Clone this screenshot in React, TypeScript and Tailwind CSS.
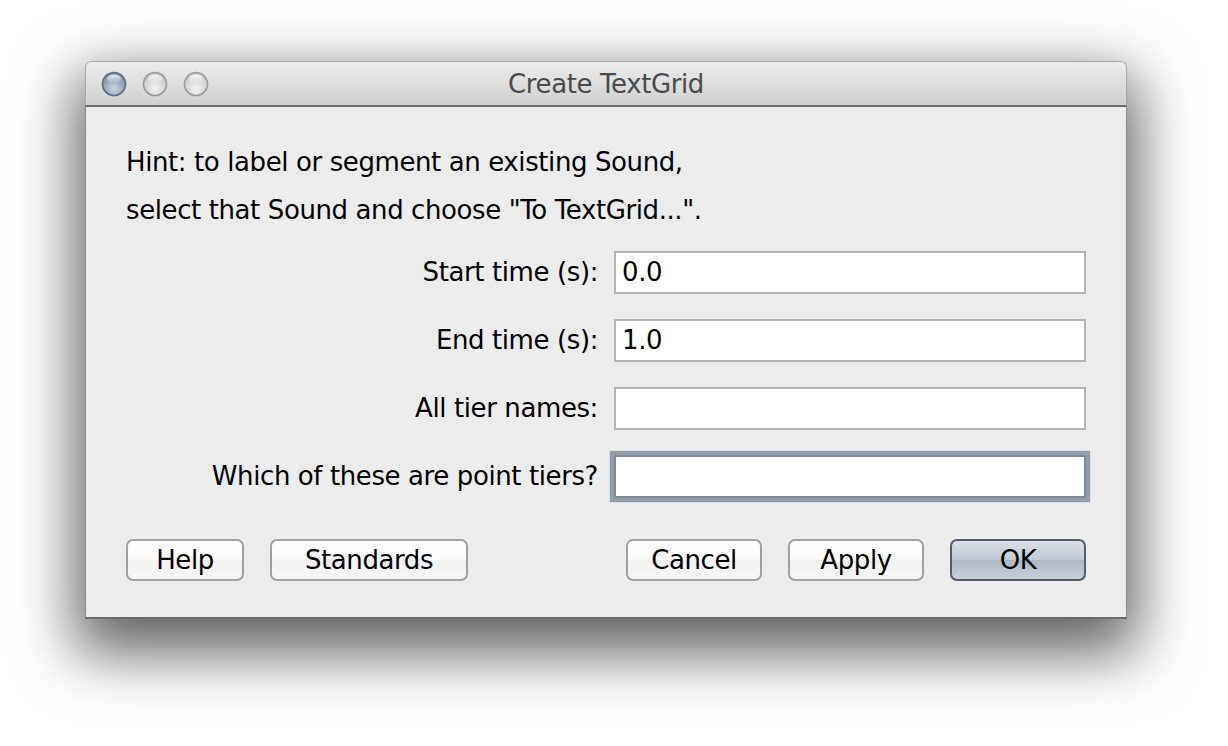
import React from "react";

function Light({ graphite }: { graphite?: boolean }) {
  const id = graphite ? "g1" : "g2";
  return (
    <svg width="26" height="26" viewBox="0 0 26 26">
      <defs>
        <radialGradient id={id} cx="50%" cy="70%" r="60%">
          {graphite ? (
            <>
              <stop offset="0%" stopColor="#c9d4de" />
              <stop offset="100%" stopColor="#7f93a8" />
            </>
          ) : (
            <>
              <stop offset="0%" stopColor="#f4f4f4" />
              <stop offset="100%" stopColor="#c9c9c9" />
            </>
          )}
        </radialGradient>
        <linearGradient id={id + "h"} x1="0" y1="0" x2="0" y2="1">
          <stop offset="0%" stopColor="#ffffff" stopOpacity="0.85" />
          <stop offset="100%" stopColor="#ffffff" stopOpacity="0" />
        </linearGradient>
      </defs>
      <circle cx="13" cy="13" r="11.5" fill={`url(#${id})`} stroke={graphite ? "#5e6f82" : "#9b9b9b"} strokeWidth="1.6" />
      <ellipse cx="13" cy="8" rx="7" ry="4.2" fill={`url(#${id}h)`} />
    </svg>
  );
}

function Field({ value, focused }: { value?: string; focused?: boolean }) {
  return (
    <div
      className={
        "w-[472px] h-[43px] bg-white flex items-center pl-[6px] text-[26px] text-black " +
        (focused
          ? "border-2 border-[#7d8898] shadow-[0_0_1px_4px_rgba(130,143,162,0.85)]"
          : "border-2 border-[#b3b3b3]")
      }
    >
      {value}
    </div>
  );
}

function Row({ label, value, focused }: { label: string; value?: string; focused?: boolean }) {
  return (
    <div className="flex items-center gap-[16px]">
      <div className="flex-1 text-right text-[26px] text-black whitespace-nowrap">{label}</div>
      <Field value={value} focused={focused} />
    </div>
  );
}

function Button({ label, w, def }: { label: string; w: string; def?: boolean }) {
  return (
    <div
      className={
        "h-[42px] rounded-[7px] flex items-center justify-center text-[26px] text-black border-2 " +
        w +
        " " +
        (def
          ? "border-[#535a69] bg-[linear-gradient(to_bottom,#d9dee6_0%,#c3cbd6_48%,#aeb8c6_52%,#c7ced8_100%)]"
          : "border-[#a0a0a0] bg-[linear-gradient(to_bottom,#ffffff_0%,#fbfbfb_48%,#f0f0f0_52%,#f7f7f7_100%)]")
      }
    >
      {label}
    </div>
  );
}

export default function App() {
  return (
    <div
      className="w-[1228px] h-[746px] bg-white overflow-hidden pt-[61px] pl-[85px]"
      style={{ fontFamily: '"DejaVu Sans", "Liberation Sans", sans-serif' }}
    >
      <div className="w-[1042px] h-[558px] flex flex-col rounded-t-[6px] shadow-[0_24px_60px_10px_rgba(0,0,0,0.62)] tracking-[-0.4px]">
        <div className="h-[44px] shrink-0 rounded-t-[6px] border border-b-0 border-[#a9a9a9] bg-[linear-gradient(to_bottom,#ececec,#d0d0d0)] border-b-[#5e5e5e] flex items-center relative">
          <div className="flex items-center gap-[15px] pl-[15px] pt-[1px]">
            <Light graphite />
            <Light />
            <Light />
          </div>
          <div className="absolute inset-0 flex items-center justify-center text-[26px] text-[#4a4a4a] pt-[2px]">
            Create TextGrid
          </div>
        </div>
        <div className="flex-1 flex flex-col bg-[#ececec] border-x border-b-2 border-t-2 border-x-[#8a8a8a] border-b-[#6a6a6a] border-t-[#6a6a6a] pt-[31px] pl-[40px] pr-[40px]">
          <div className="text-[26px] leading-[48px] text-black">
            <div>Hint: to label or segment an existing Sound,</div>
            <div>select that Sound and choose "To TextGrid...".</div>
          </div>
          <div className="flex flex-col gap-[25px] mt-[17px]">
            <Row label="Start time (s):" value="0.0" />
            <Row label="End time (s):" value="1.0" />
            <Row label="All tier names:" />
            <Row label="Which of these are point tiers?" focused />
          </div>
          <div className="flex items-center mt-[41px]">
            <div className="flex gap-[26px]">
              <Button label="Help" w="w-[118px]" />
              <Button label="Standards" w="w-[198px]" />
            </div>
            <div className="flex gap-[26px] ml-auto">
              <Button label="Cancel" w="w-[136px]" />
              <Button label="Apply" w="w-[136px]" />
              <Button label="OK" w="w-[136px]" def />
            </div>
          </div>
        </div>
      </div>
    </div>
  );
}
